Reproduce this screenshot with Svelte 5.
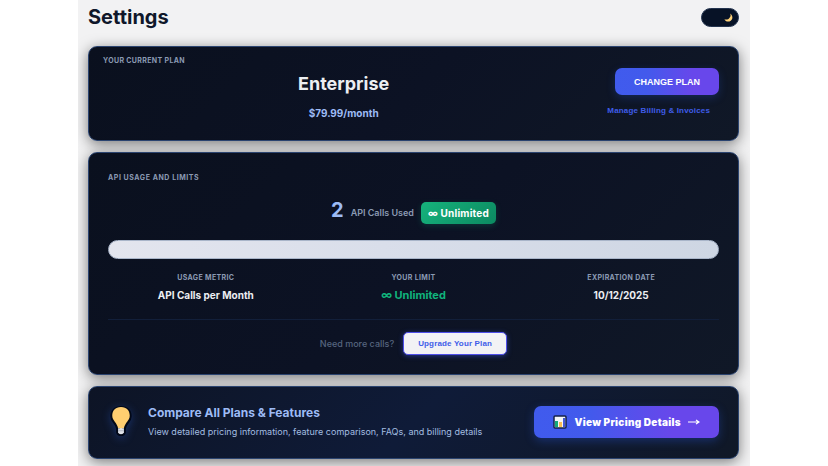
<script lang="ts">
	interface Metric {
		label: string;
		value: string;
		accent?: boolean;
	}

	const plan = { name: 'Enterprise', price: '$79.99/month' };
	const usage = { used: 2, limit: '∞ Unlimited' };

	const metrics: Metric[] = [
		{ label: 'Usage Metric', value: 'API Calls per Month' },
		{ label: 'Your Limit', value: usage.limit, accent: true },
		{ label: 'Expiration Date', value: '10/12/2025' }
	];

	let dark = $state(true);
</script>

<main class="settings">
	<header class="topbar">
		<h1>Settings</h1>
		<label class="theme-toggle">
			<input type="checkbox" bind:checked={dark} aria-label="Dark mode" />
			<svg class="moon" viewBox="0 0 20 20" aria-hidden="true">
				<path d="M14 1C20 6 20 13 15 17C10 21 3 19 1 14C6 15 10 14 12 11C15 8 15 5 14 1Z" fill="#ffd279" />
			</svg>
		</label>
	</header>

	<section class="card plan">
		<div class="plan-info">
			<h2 class="eyebrow">Your current plan</h2>
			<p class="plan-name">{plan.name}</p>
			<p class="plan-price">{plan.price}</p>
		</div>
		<div class="plan-actions">
			<button type="button" class="change">Change plan</button>
			<a href="#billing" class="manage">Manage Billing &amp; Invoices</a>
		</div>
	</section>

	<section class="card usage">
		<h2 class="eyebrow">API usage and limits</h2>
		<div class="usage-summary">
			<span class="count">{usage.used}</span>
			<span class="count-label">API Calls Used</span>
			<span class="badge">{usage.limit}</span>
		</div>
		<div class="track" role="progressbar" aria-label="API calls used" aria-valuenow={usage.used}></div>
		<div class="metrics">
			{#each metrics as metric}
				<div class="metric">
					<span class="metric-label">{metric.label}</span>
					<span class="metric-value" class:accent={metric.accent}>{metric.value}</span>
				</div>
			{/each}
		</div>
		<div class="upgrade-row">
			<span class="hint">Need more calls?</span>
			<button type="button" class="upgrade">Upgrade Your Plan</button>
		</div>
	</section>

	<section class="card compare">
		<svg class="bulb" viewBox="0 0 26 36" aria-hidden="true">
			<path
				d="M13 4C7.500 4 4 7.500 4 12.500C4 17.500 9 19 10 25V29Q10.500 31 13 31Q15.500 31 16 29V25C17 19 22 17.500 22 12.500C22 7.500 18.500 4 13 4Z"
				fill="#ffce70"
				stroke="#020817"
				stroke-width="4"
				stroke-linejoin="round"
			/>
			<path d="M13 3C7 3 4 7 4 12C4 17 9 19 10 25H16C17 19 22 17 22 12C22 7 19 3 13 3Z" fill="#ffce70" />
			<path d="M10 25H16V29Q15.500 31 13 31Q10.500 31 10 29Z" fill="#dfe2e8" />
			<path d="M10 27.500H16" stroke="#aeb4c0" />
		</svg>
		<div class="compare-text">
			<h2>Compare All Plans &amp; Features</h2>
			<p>View detailed pricing information, feature comparison, FAQs, and billing details</p>
		</div>
		<button type="button" class="pricing">
			<svg class="chart" viewBox="0 0 14 14" aria-hidden="true">
				<rect x="1" y="1" width="12" height="12" rx="1" fill="#f4f5f7" stroke="#14204a" stroke-width="1.500" />
				<rect x="2" y="6" width="3" height="6" fill="#16a87a" />
				<rect x="6" y="7" width="3" height="5" fill="#f9bd54" />
				<rect x="10" y="3" width="2" height="9" fill="#4256d8" />
			</svg>
			<span>View Pricing Details</span>
			<svg class="arrow" viewBox="0 0 12 8" aria-hidden="true">
				<path d="M0 4H11M8 2L11 4L8 6" fill="none" stroke="#fff" stroke-width="1.200" />
			</svg>
		</button>
	</section>
</main>

<style>
	:global(body) {
		background: #fff;
	}

	.settings {
		box-sizing: border-box;
		max-width: 672px;
		margin: 0 auto;
		padding: 4px 11px 7px 10px;
		display: flex;
		flex-direction: column;
		gap: 11px;
		background: #f2f2f3;
		font-family: Inter, 'Liberation Sans', sans-serif;
		overflow: hidden;
	}

	h1,
	h2,
	p {
		margin: 0;
	}

	button {
		font-family: 'Liberation Sans', Arial, sans-serif;
		font-weight: 700;
		cursor: pointer;
	}

	.topbar {
		display: flex;
		align-items: center;
		justify-content: space-between;
		height: 26px;
		margin-bottom: 5px;
	}

	h1 {
		font-size: 20px;
		line-height: 26px;
		font-weight: 700;
		color: #0f172a;
	}

	.theme-toggle {
		display: flex;
		align-items: center;
		justify-content: flex-end;
		box-sizing: border-box;
		width: 38px;
		height: 19px;
		padding: 0 5px;
		border: 1px solid #24344f;
		border-radius: 10px;
		background: #071226;
		cursor: pointer;
	}

	.theme-toggle input {
		appearance: none;
		width: 0;
		height: 0;
		margin: 0;
	}

	.theme-toggle input:not(:checked) + .moon {
		opacity: 0.4;
	}

	.moon {
		width: 9px;
		height: 9px;
	}

	.card {
		box-sizing: border-box;
		border: 1px solid #2b4470;
		border-radius: 9px;
		background: linear-gradient(135deg, #0a101e 0%, #0c1224 50%, #101827 100%);
		box-shadow: 0 3px 14px rgba(0, 0, 0, 0.5);
	}

	.eyebrow,
	.metric-label {
		font-size: 7px;
		line-height: 10px;
		font-weight: 700;
		letter-spacing: 0.05em;
		text-transform: uppercase;
		color: #8b9ab3;
	}

	.plan {
		display: flex;
		justify-content: space-between;
		gap: 14px;
		padding: 9px 19px 19px 14px;
	}

	.plan-info {
		flex: 1;
		text-align: center;
	}

	.plan-info .eyebrow {
		text-align: left;
	}

	.plan-name {
		margin-top: 6px;
		font-size: 18px;
		line-height: 24px;
		font-weight: 700;
		color: #eceef2;
	}

	.plan-price {
		margin-top: 9px;
		font-size: 10px;
		line-height: 16px;
		font-weight: 700;
		color: #9dbbf5;
	}

	.plan-actions {
		display: flex;
		flex-direction: column;
		align-items: flex-end;
		gap: 10px;
		padding-top: 12px;
	}

	.change {
		height: 27px;
		padding: 0 19px;
		border: 0;
		border-radius: 7px;
		background: linear-gradient(90deg, #405bed 0%, #425aec 30%, #6847eb 75%);
		box-shadow: 0 3px 8px rgba(40, 90, 220, 0.25);
		font-size: 9px;
		text-transform: uppercase;
		color: #fff;
	}

	.manage {
		padding: 0 9px;
		font-family: 'Liberation Sans', Arial, sans-serif;
		font-size: 8px;
		line-height: 12px;
		font-weight: 700;
		letter-spacing: 0.02em;
		text-decoration: none;
		color: #3f5de9;
	}

	.usage {
		padding: 20px 19px 19px;
	}

	.usage .eyebrow {
		letter-spacing: 0.08em;
	}

	.usage-summary {
		display: flex;
		align-items: center;
		justify-content: center;
		gap: 7px;
		margin-top: 17px;
	}

	.count {
		font-size: 20px;
		line-height: 20px;
		font-weight: 700;
		color: #9dbbf5;
		padding-bottom: 6px;
	}

	.count-label {
		font-size: 9px;
		line-height: 16px;
		font-weight: 600;
		color: #8b9ab3;
	}

	.badge {
		padding: 0 7px;
		border-radius: 5px;
		background: linear-gradient(135deg, #16b37c, #0c8a61);
		box-shadow: 0 2px 6px rgba(16, 185, 129, 0.2);
		font-size: 10px;
		line-height: 22px;
		font-weight: 700;
		letter-spacing: 0.02em;
		color: #fff;
	}

	.track {
		box-sizing: border-box;
		height: 19px;
		margin-top: 14px;
		border: 1px solid #a9b5c9;
		border-radius: 10px;
		background: linear-gradient(90deg, #e3e5ee, #d9deea 45%, #ced6e3);
	}

	.metrics {
		display: grid;
		grid-template-columns: repeat(3, 1fr);
		gap: 12px;
		margin-top: 14px;
		padding-bottom: 16px;
		border-bottom: 1px solid #121f3a;
	}

	.metric {
		display: flex;
		flex-direction: column;
		align-items: center;
		gap: 4px;
	}

	.metric-value {
		font-size: 10px;
		line-height: 16px;
		font-weight: 700;
		color: #eceef2;
	}

	.metric-value.accent {
		font-size: 11px;
		color: #10b47c;
	}

	.upgrade-row {
		display: flex;
		align-items: center;
		justify-content: center;
		gap: 9px;
		margin-top: 12px;
	}

	.hint {
		font-size: 9px;
		line-height: 16px;
		font-weight: 500;
		color: #56657f;
	}

	.upgrade {
		height: 23px;
		padding: 0 14px;
		border: 1px solid #4f4fe9;
		border-radius: 5px;
		background: #f2f2f5;
		box-shadow: 0 1px 5px rgba(60, 90, 240, 0.5);
		font-size: 8px;
		letter-spacing: 0.02em;
		color: #3f5de9;
	}

	.compare {
		display: flex;
		align-items: center;
		padding: 17px 19px 19px;
		background: linear-gradient(135deg, #0d1425 0%, #0f1b38 50%, #101827 100%);
	}

	.bulb {
		flex: none;
		width: 26px;
		height: 35px;
		margin-right: 14px;
		filter: drop-shadow(0 2px 4px rgba(40, 90, 200, 0.4));
	}

	.compare-text {
		flex: 1;
	}

	.compare h2 {
		font-size: 12px;
		line-height: 16px;
		font-weight: 700;
		color: #9dbbf5;
	}

	.compare p {
		margin-top: 4px;
		font-size: 9px;
		line-height: 14px;
		color: #a3bde0;
	}

	.pricing {
		display: flex;
		align-items: center;
		gap: 7px;
		height: 32px;
		padding: 0 19px;
		border: 0;
		border-radius: 7px;
		background: linear-gradient(90deg, #405bed 0%, #425aec 30%, #6847eb 75%);
		box-shadow: 0 3px 10px rgba(40, 90, 220, 0.35);
		font-family: Inter, 'Liberation Sans', sans-serif;
		font-size: 10px;
		font-weight: 900;
		letter-spacing: 0.03em;
		color: #fff;
	}

	.chart {
		width: 14px;
		height: 14px;
	}

	.arrow {
		width: 12px;
		height: 8px;
	}
</style>
